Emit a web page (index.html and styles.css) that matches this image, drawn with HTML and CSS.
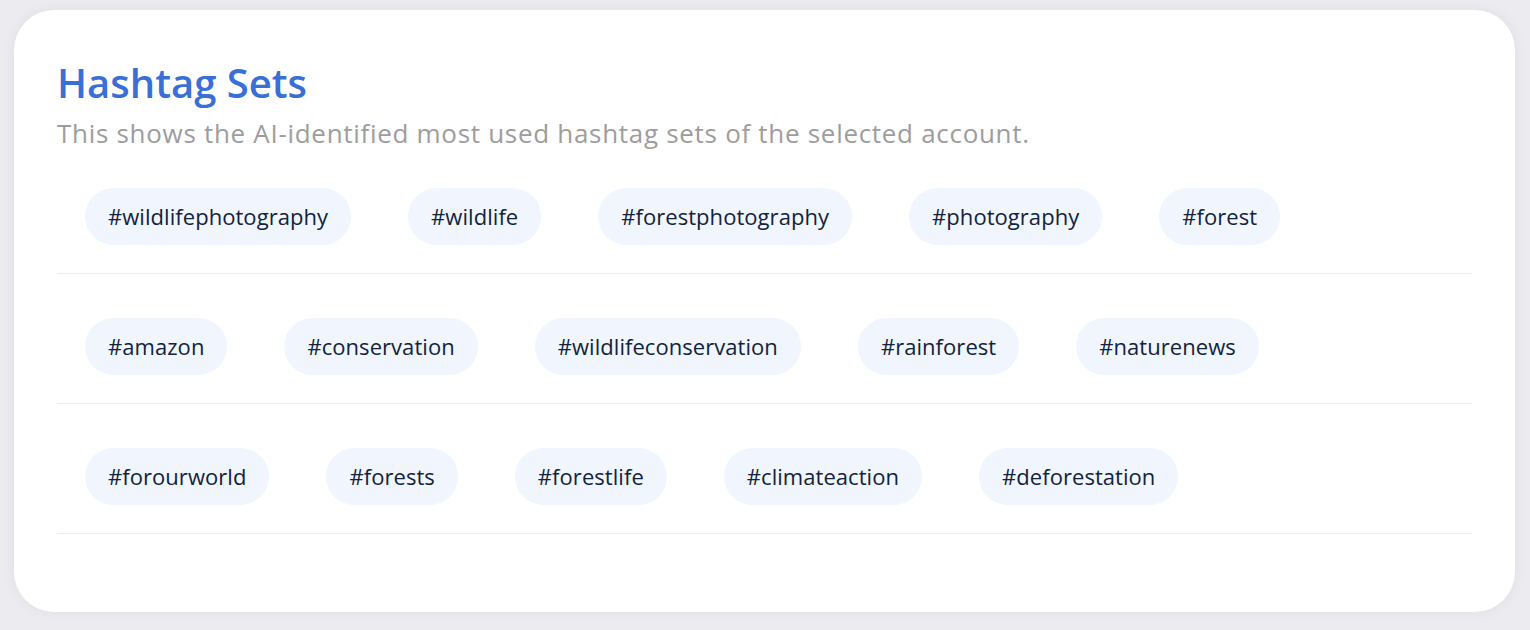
FILE: index.html
```html
<!DOCTYPE html>
<html>
<head>
<meta charset="utf-8">
<link rel="stylesheet" href="styles.css">
</head>
<body>
<div class="card">
  <h1 class="title">Hashtag Sets</h1>
  <p class="subtitle">This shows the AI-identified most used hashtag sets of the selected account.</p>
  <div class="set">
    <span class="chip">#wildlifephotography</span>
    <span class="chip">#wildlife</span>
    <span class="chip">#forestphotography</span>
    <span class="chip">#photography</span>
    <span class="chip">#forest</span>
  </div>
  <div class="set">
    <span class="chip">#amazon</span>
    <span class="chip">#conservation</span>
    <span class="chip">#wildlifeconservation</span>
    <span class="chip">#rainforest</span>
    <span class="chip">#naturenews</span>
  </div>
  <div class="set">
    <span class="chip">#forourworld</span>
    <span class="chip">#forests</span>
    <span class="chip">#forestlife</span>
    <span class="chip">#climateaction</span>
    <span class="chip">#deforestation</span>
  </div>
</div>
</body>
</html>
```
FILE: styles.css
```css
html, body {
  margin: 0;
  padding: 0;
}
body {
  background: #ececf0;
  font-family: "Open Sans", "Noto Sans", sans-serif;
  padding: 10px 15px 18px 14px;
  height: 630px;
  box-sizing: border-box;
}
.card {
  background: #fff;
  border-radius: 40px;
  box-shadow: 0 0 14px rgba(0,0,0,0.06);
  padding: 50px 43px 78px 43px;
  height: 100%;
  box-sizing: border-box;
}
.title {
  margin: 0;
  font-size: 40px;
  font-weight: 600;
  color: #3a6fd8;
  line-height: 46px;
}
.subtitle {
  margin: 11px 0 0 0;
  font-size: 26px;
  letter-spacing: 0.7px;
  color: #9d9d9d;
  line-height: 32px;
}
.set {
  display: flex;
  gap: 57px;
  padding: 0 28px 28px 28px;
  border-bottom: 1px solid #e9edf5;
}
.subtitle + .set {
  margin-top: 39px;
}
.set + .set {
  padding-top: 44px;
}
.chip {
  background: #f1f5fd;
  color: #12233d;
  font-size: 22px;
  letter-spacing: 0.05px;
  height: 57px;
  line-height: 57px;
  padding: 0 23px;
  border-radius: 29px;
  white-space: nowrap;
}
```
